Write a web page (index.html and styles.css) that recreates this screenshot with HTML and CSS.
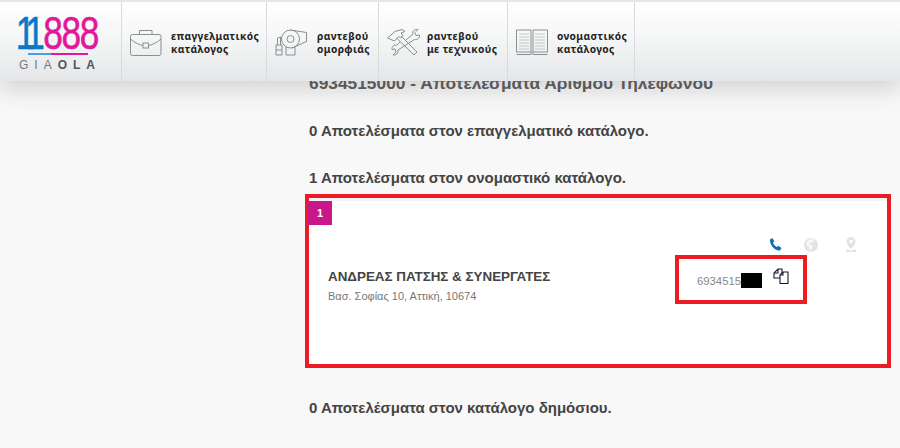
FILE: index.html
```html
<!DOCTYPE html>
<html lang="el">
<head>
<meta charset="utf-8">
<title>11888</title>
<link rel="stylesheet" href="styles.css">
</head>
<body>
<header class="topbar">
  <a class="logo">
    <span class="logo-num"><span class="blue">11</span><span class="pink">888</span></span>
    <span class="logo-rule"></span>
    <span class="logo-sub">GIA<b>OLA</b></span>
  </a>
  <a class="nav nav-1">
    <svg width="32" height="27" viewBox="0 0 32 27" fill="none" stroke="#8a8f92" stroke-width="1"><rect x=".5" y="5.500" width="30.500" height="21" rx="2"/><path d="M9.500 5.500V1.500h12.500v4M.5 10c4 4 10 6 12.500 6.500M31 10c-4 4-10 6-12.500 6.500"/><rect x="13" y="14" width="5.500" height="5"/></svg>
    <span>επαγγελματικός<br>κατάλογος</span>
  </a>
  <a class="nav nav-2">
    <svg width="32" height="27" viewBox="0 0 32 27" fill="none" stroke="#8a8f92" stroke-width="1"><circle cx="15.500" cy="10" r="9"/><circle cx="15.500" cy="10" r="3.500"/><path d="M15.500 1l16 2.500v9L17 19M11 18v8h9v-8M1 26V16h6v10zM2.500 16V9l3-1v8M1 21h6"/></svg>
    <span>ραντεβού<br>ομορφιάς</span>
  </a>
  <a class="nav nav-3">
    <svg width="33" height="27" viewBox="0 0 33 27" fill="none" stroke="#8a8f92" stroke-width="1"><path d="M.5 9 8 2.500 15 .5l3 2-4 1.500 2 2.500-2.500 2.500-2-1.500-4 4.500zM10 9.500l17 16.500 3-3L14 7M19 11l7-6c-1-3 1-5 5-4.500L28 3.500l1 3 3.500-.5c.5 3-2 5-5 4.500L11 21c.5 3-1.500 5.500-5 5l3-3-1-3-3 .5c-.5-3 2-5 5-4.500L13 13"/></svg>
    <span>ραντεβού<br>με τεχνικούς</span>
  </a>
  <a class="nav nav-4">
    <svg width="32" height="27" viewBox="0 0 32 27" fill="none" stroke="#8a8f92" stroke-width="1"><path d="M.5 1h14.500v22H.5zM17 1h14.500v22H17zM15 23c0 3 2 3 2 0M.5 25.500H15M17 25.500h14.500"/><path stroke="#c4c7c9" d="M3 5h10M3 8h10M3 11h10M3 14h10M3 17h10M3 20h10M19 5h10M19 8h10M19 11h10M19 14h10M19 17h10M19 20h10"/></svg>
    <span>ονομαστικός<br>κατάλογος</span>
  </a>
  <span class="nav-end"></span>
</header>

<main class="results">
  <h1 class="page-title">6934515000 - Αποτελέσματα Αριθμού Τηλεφώνου</h1>
  <h2 class="count count-first">0 Αποτελέσματα στον επαγγελματικό κατάλογο.</h2>
  <h2 class="count">1 Αποτελέσματα στον ονομαστικό κατάλογο.</h2>

  <section class="highlight">
    <article class="card">
      <span class="badge">1</span>
      <div class="actions">
        <svg width="14" height="14" viewBox="0 0 14 14"><path fill="#0b72b9" d="M1 1.500 3.400 0l2 3.400-1.500 1.200c.5 1.800 2.200 3.700 4 4.400l1.300-1.300 3.400 2.400-1.700 2.400C6.500 13.500.5 7 1 1.500z"/></svg>
        <svg width="14" height="14" viewBox="0 0 14 14"><circle cx="7" cy="7" r="7" fill="#e3e3e3"/><path fill="#fff" d="M7 1 10 1.500 9 4 6.500 4.500 6 7 9 8 8 11 6 13 5 9 2 7 3 3z" opacity=".7"/></svg>
        <svg class="pin" width="12" height="15" viewBox="0 0 12 15"><path fill="#e3e3e3" d="M6 0a4.500 4.500 0 0 1 4.500 4.500C10.500 7.500 6 12 6 12S1.500 7.500 1.500 4.500A4.500 4.500 0 0 1 6 0z"/><circle cx="6" cy="4.500" r="1.700" fill="#fff"/><path fill="#e3e3e3" d="M1 12.500h2.500L6 14l2.500-1.500H11V15H1z"/></svg>
      </div>
      <div class="card-body">
        <div class="contact">
          <h3 class="name">ΑΝΔΡΕΑΣ ΠΑΤΣΗΣ &amp; ΣΥΝΕΡΓΑΤΕΣ</h3>
          <p class="address">Βασ. Σοφίας 10, Αττική, 10674</p>
        </div>
        <div class="phone-box">
          <span class="phone">6934515</span><span class="redact"></span>
          <svg class="copy" width="16" height="17" viewBox="0 0 16 17" fill="#fff" stroke="#14142e" stroke-width="1.100"><path d="M1 10V5l4-4h4v9z"/><path d="M5 1v4H1" fill="none"/><path d="M7 15.500V7l3-3h5v11.500z"/><path d="M10 4v3H7" fill="none"/></svg>
        </div>
      </div>
    </article>
  </section>

  <h2 class="count count-last">0 Αποτελέσματα στον κατάλογο δημόσιου.</h2>
</main>
</body>
</html>
```

FILE: styles.css
```css
* { box-sizing: border-box; }
html, body { margin: 0; height: 448px; overflow: hidden; }
body {
  background: #f8f8f8;
  font-family: "Liberation Sans", Arial, sans-serif;
  color: #444;
}

/* header overlays the page content */
.topbar {
  position: absolute;
  top: 0; left: 0; right: 0;
  height: 81px;
  display: flex;
  border-top: 2px solid #e6e6e6;
  background: linear-gradient(#fff 0%, #f5f6f6 45%, #e5e6e8 100%);
  box-shadow: 0 8px 22px rgba(110,110,110,.28);
  z-index: 2;
}
.logo {
  width: 122px;
  display: flex;
  flex-direction: column;
  align-items: flex-start;
  padding: 12px 0 0 18px;
  border-right: 1px solid #d9dadb;
}
.logo-num {
  display: block;
  width: 106px;
  font-size: 47px;
  line-height: 38px;
  white-space: nowrap;
  -webkit-text-stroke: .6px currentColor;
  transform: scaleX(.75);
  transform-origin: left;
}
.blue { color: #0a78c8; letter-spacing: -10px; margin: 0 8px 0 -3px; }
.pink { color: #e0189a; letter-spacing: -1.800px; }
.logo-rule {
  width: 60px;
  height: 2px;
  margin: 1px 0 0 10px;
  background: linear-gradient(90deg, #4b9fdc 0 38%, #e0189a 38%);
}
.logo-sub {
  font-size: 12px;
  letter-spacing: 6px;
  line-height: 14px;
  margin: 3px 0 0 1px;
  color: #777;
}
.logo-sub b { color: #555; }

.nav {
  display: flex;
  align-items: center;
  gap: 9px;
  padding: 2px 0 0 8px;
  border-right: 1px solid #d9dadb;
  font-family: "Noto Sans", sans-serif;
  font-size: 10.200px;
  font-weight: 700;
  line-height: 13px;
  letter-spacing: .4px;
  color: #222;
  white-space: nowrap;
}
.nav svg { flex: none; }
.nav-1 { width: 145px; }
.nav-2 { width: 112px; gap: 10px; }
.nav-3 { width: 129px; gap: 7px; }
.nav-4 { width: 127px; }
.nav-end { flex: 1; }

.results { padding: 73px 0 0 309px; }
.page-title {
  margin: 0;
  font-size: 17.350px;
  line-height: 20px;
  font-weight: 700;
  color: #555;
  white-space: nowrap;
}
.count {
  margin: 27px 0 0;
  font-size: 15px;
  line-height: 20px;
  font-weight: 700;
  color: #444;
}
.count-first { margin-top: 28px; }
.count-last { margin-top: 30px; }

.highlight {
  margin: 6px 0 0 -4px;
  width: 586px;
  height: 174px;
  border: 4px solid #ed1c24;
  background: #f4f4f4;
  padding-top: 3px;
}
.card {
  position: relative;
  height: 100%;
  background: #fff;
}
.badge {
  position: absolute;
  top: 0; left: -1px;
  width: 24px;
  height: 24px;
  background: #c9178b;
  color: #fff;
  font-size: 11px;
  font-weight: 700;
  line-height: 24px;
  text-align: center;
}
.actions {
  display: flex;
  align-items: center;
  justify-content: flex-end;
  gap: 21px;
  height: 15px;
  padding: 0 30px 0 0;
  position: relative;
  top: 36px;
}
.pin { margin-left: 6px; }
.card-body {
  display: flex;
  justify-content: space-between;
  padding: 39px 80px 0 19px;
}
.contact { padding-top: 14px; }
.name {
  margin: 0;
  font-size: 13.400px;
  line-height: 16px;
  font-weight: 700;
  color: #444;
}
.address {
  margin: 4px 0 0;
  font-size: 11px;
  line-height: 14px;
  color: #777;
}
.phone-box {
  width: 132px;
  height: 49px;
  border: 4px solid #ed1c24;
  background: #fff;
  display: flex;
  align-items: center;
  padding: 0 0 0 18px;
}
.phone { font-size: 11.300px; color: #888; position: relative; top: 1px; }
.redact { width: 21px; height: 15px; background: #000; position: relative; top: 1px; }
.copy { margin: -6px 0 0 11px; flex: none; }
```
